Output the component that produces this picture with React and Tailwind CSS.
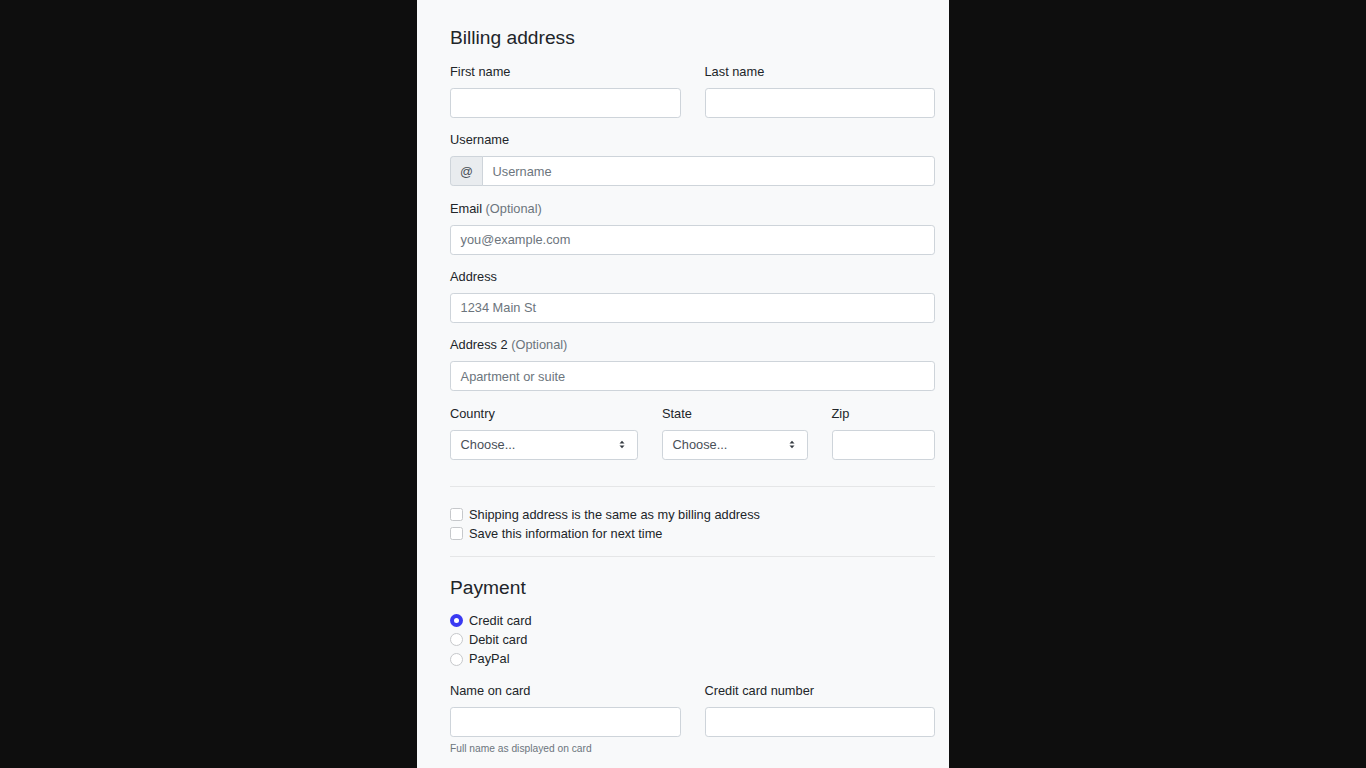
import React from "react";

const font = { fontFamily: '"Liberation Sans", Arial, sans-serif' };

function Label({ children, optional }) {
  return (
    <div className="text-[12.8px] leading-[19.2px] mb-[6.8px] text-[#212529]">
      {children}
      {optional && <span className="text-[#6c757d]"> (Optional)</span>}
    </div>
  );
}

function Input({ placeholder }) {
  return (
    <div className="h-[30px] bg-white border border-[#ced4da] rounded-[3.2px] px-[9.6px] flex items-center text-[12.8px] text-[#6c757d]">
      {placeholder}
    </div>
  );
}

function Select() {
  return (
    <div className="h-[30px] bg-white border border-[#ced4da] rounded-[3.2px] pl-[9.6px] pr-[10px] flex items-center justify-between text-[12.8px] text-[#495057]">
      <span>Choose...</span>
      <svg width="6" height="9" viewBox="0 0 6 9" className="mr-[2px]">
        <path d="M0.5 3.6 L3 0.8 L5.5 3.6 Z" fill="#343a40" />
        <path d="M0.5 5.4 L3 8.2 L5.5 5.4 Z" fill="#343a40" />
      </svg>
    </div>
  );
}

function Field({ label, optional, placeholder, className = "" }) {
  return (
    <div className={"mb-[12.4px] " + className}>
      <Label optional={optional}>{label}</Label>
      <Input placeholder={placeholder} />
    </div>
  );
}

function Check({ children }) {
  return (
    <div className="flex items-center h-[19.2px] text-[12.8px] text-[#212529]">
      <span className="w-[13px] h-[13px] bg-white border border-[#c6c8cb] rounded-[2.5px] mr-[6px] shrink-0" />
      <span>{children}</span>
    </div>
  );
}

function Radio({ children, checked }) {
  return (
    <div className="flex items-center h-[19.2px] text-[12.8px] text-[#212529]">
      {checked ? (
        <span className="w-[13px] h-[13px] rounded-full bg-[#3a3af2] mr-[6px] shrink-0 flex items-center justify-center">
          <span className="w-[5px] h-[5px] rounded-full bg-white" />
        </span>
      ) : (
        <span className="w-[13px] h-[13px] rounded-full bg-white border border-[#c6c8cb] mr-[6px] shrink-0" />
      )}
      <span>{children}</span>
    </div>
  );
}

export default function App() {
  return (
    <div className="min-h-screen h-[768px] bg-[#0e0e0e] flex justify-center overflow-hidden" style={font}>
      <div className="w-[532px] h-[768px] bg-[#f8f9fa] pl-[33px] pr-[14px] pt-[26px] overflow-hidden">
        <h4 className="text-[19.2px] leading-[23px] mb-[12.8px] text-[#212529]">Billing address</h4>

        <div className="grid grid-cols-2 gap-x-[24px]">
          <Field label="First name" />
          <Field label="Last name" />
        </div>

        <div className="mb-[12.4px]">
          <Label>Username</Label>
          <div className="flex h-[30px]">
            <div className="w-[33px] bg-[#e9ecef] border border-[#ced4da] rounded-l-[3.2px] flex items-center justify-center text-[12.8px] text-[#495057]">
              @
            </div>
            <div className="flex-1 -ml-px bg-white border border-[#ced4da] rounded-r-[3.2px] px-[9.6px] flex items-center text-[12.8px] text-[#6c757d]">
              Username
            </div>
          </div>
        </div>

        <Field label="Email" optional placeholder="you@example.com" />
        <Field label="Address" placeholder="1234 Main St" />
        <Field label="Address 2" optional placeholder="Apartment or suite" />

        <div className="grid grid-cols-[188px_145.5px_1fr] gap-x-[24px]">
          <div className="mb-[12.4px]">
            <Label>Country</Label>
            <Select />
          </div>
          <div className="mb-[12.4px]">
            <Label>State</Label>
            <Select />
          </div>
          <div className="mb-[12.4px]">
            <Label>Zip</Label>
            <Input />
          </div>
        </div>

        <div className="mt-[14.2px] mb-[17.8px] border-t border-[#e5e6e7]" />

        <Check>Shipping address is the same as my billing address</Check>
        <Check>Save this information for next time</Check>

        <div className="mt-[12.8px] mb-[18.4px] border-t border-[#e5e6e7]" />

        <h4 className="text-[19.2px] leading-[23px] mb-[12.4px] text-[#212529]">Payment</h4>

        <div className="mb-[12.8px]">
          <Radio checked>Credit card</Radio>
          <Radio>Debit card</Radio>
          <Radio>PayPal</Radio>
        </div>

        <div className="grid grid-cols-2 gap-x-[24px]">
          <div className="mb-[12.8px]">
            <Label>Name on card</Label>
            <Input />
            <div className="mt-[3.2px] text-[10.24px] leading-[15px] text-[#6c757d]">Full name as displayed on card</div>
          </div>
          <div className="mb-[12.8px]">
            <Label>Credit card number</Label>
            <Input />
          </div>
        </div>
      </div>
    </div>
  );
}
